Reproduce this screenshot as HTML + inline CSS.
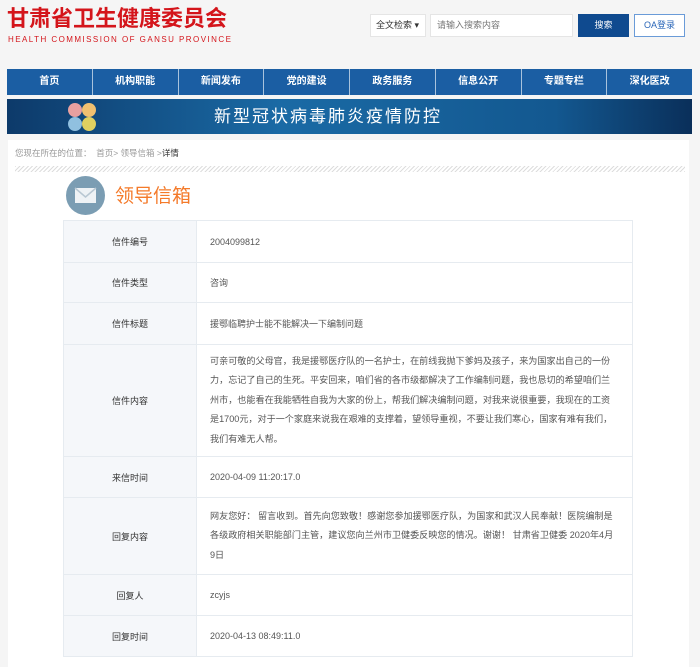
<!DOCTYPE html>
<html><head><meta charset="utf-8"><style>
*{margin:0;padding:0;box-sizing:border-box}
body{width:700px;height:667px;overflow:hidden;background:#f5f5f5;font-family:"Liberation Sans","Noto Sans CJK SC",sans-serif;position:relative}
.abs{position:absolute}
.logo{left:7px;top:5px;color:#d4151b;font-size:22px;font-weight:bold;white-space:nowrap;line-height:28px}
.en{left:8px;top:35px;color:#d4151b;font-size:8px;letter-spacing:1.45px;white-space:nowrap;line-height:10px}
.sel{left:370px;top:14px;width:56px;height:23px;background:#fff;border:1px solid #e5e5e5;font-size:9px;line-height:21px;padding-left:5px;color:#333}
.inp{left:430px;top:14px;width:143px;height:23px;background:#fff;border:1px solid #e5e5e5;font-size:9px;line-height:21px;padding-left:6px;color:#777}
.btn{left:578px;top:14px;width:51px;height:23px;background:#0f4a8f;color:#fff;font-size:9px;line-height:23px;text-align:center}
.oa{left:634px;top:14px;width:51px;height:23px;background:#fff;border:1px solid #6a9bd8;color:#2a66b8;font-size:9px;line-height:21px;text-align:center}
.nav{left:7px;top:69px;width:685px;height:26px;display:flex;background:#a9c3dd}
.nav div{flex:1;background:#1b5ea3;color:#fff;font-size:10px;font-weight:bold;text-align:center;line-height:26px;margin-right:1px}
.nav div:last-child{margin-right:0}
.ban{left:7px;top:99px;width:685px;height:35px;background:linear-gradient(90deg,#0d3a6a,#1a6aa5 40%,#135890 80%,#0a2f5a);color:#fff;font-size:17px;line-height:35px;letter-spacing:2px}
.main{left:8px;top:140px;width:681px;height:527px;background:#fff}
.crumb{left:15px;top:147px;font-size:8.5px;color:#999;white-space:nowrap}
.hatch{left:15px;top:166px;width:670px;height:6px;background:repeating-linear-gradient(135deg,#ddd 0 1px,#fff 1px 3px)}
.ic{left:66px;top:176px;width:39px;height:39px;border-radius:50%;background:#7b9db3}
.tt{left:115px;top:181px;font-size:19px;color:#f47a2a}
table{position:absolute;left:63px;top:220px;width:570px;border-collapse:collapse;font-size:9px;color:#555}
td{border:1px solid #e6ebf0}
td.l{width:133px;background:#f5f7fa;text-align:center;color:#333}
td.r{padding-left:13px}
td.p{line-height:19.4px;padding:6px 0 6px 13px;font-size:9.1px}
</style></head><body>
<div class="abs logo">甘肃省卫生健康委员会</div>
<div class="abs en">HEALTH COMMISSION OF GANSU PROVINCE</div>
<div class="abs sel">全文检索 ▾</div>
<div class="abs inp">请输入搜索内容</div>
<div class="abs btn">搜索</div>
<div class="abs oa">OA登录</div>
<div class="abs nav"><div>首页</div><div>机构职能</div><div>新闻发布</div><div>党的建设</div><div>政务服务</div><div>信息公开</div><div>专题专栏</div><div>深化医改</div></div>
<div class="abs ban"><span style="position:absolute;left:207px">新型冠状病毒肺炎疫情防控</span>
<svg style="position:absolute;left:58px;top:2px" width="36" height="32"><circle cx="10" cy="9" r="7" fill="#e8a0a0"/><circle cx="24" cy="9" r="7" fill="#f0c070"/><circle cx="10" cy="23" r="7" fill="#90c0e0"/><circle cx="24" cy="23" r="7" fill="#e0d060"/></svg></div>
<div class="abs main"></div>
<div class="abs crumb">您现在所在的位置：&nbsp; 首页&gt; 领导信箱 &gt;<span style="color:#333">详情</span></div>
<div class="abs hatch"></div>
<div class="abs ic"><svg width="39" height="39"><rect x="9" y="12" width="21" height="15" fill="#eef2f5"/><path d="M9 12 L19.5 21 L30 12" stroke="#b8c7d2" stroke-width="1.5" fill="none"/></svg></div>
<div class="abs tt">领导信箱</div>
<table>
<tr style="height:42px"><td class="l">信件编号</td><td class="r">2004099812</td></tr>
<tr style="height:40px"><td class="l">信件类型</td><td class="r">咨询</td></tr>
<tr style="height:42px"><td class="l">信件标题</td><td class="r">援鄂临聘护士能不能解决一下编制问题</td></tr>
<tr style="height:112px"><td class="l">信件内容</td><td class="p">可亲可敬的父母官，我是援鄂医疗队的一名护士，在前线我抛下爹妈及孩子，来为国家出自己的一份<br>力，忘记了自己的生死。平安回来，咱们省的各市级都解决了工作编制问题，我也恳切的希望咱们兰<br>州市，也能看在我能牺牲自我为大家的份上，帮我们解决编制问题，对我来说很重要，我现在的工资<br>是1700元，对于一个家庭来说我在艰难的支撑着，望领导重视，不要让我们寒心，国家有难有我们，<br>我们有难无人帮。</td></tr>
<tr style="height:41px"><td class="l">来信时间</td><td class="r">2020-04-09 11:20:17.0</td></tr>
<tr style="height:77px"><td class="l">回复内容</td><td class="p">网友您好： 留言收到。首先向您致敬！感谢您参加援鄂医疗队，为国家和武汉人民奉献！医院编制是<br>各级政府相关职能部门主管，建议您向兰州市卫健委反映您的情况。谢谢！ 甘肃省卫健委 2020年4月<br>9日</td></tr>
<tr style="height:41px"><td class="l">回复人</td><td class="r">zcyjs</td></tr>
<tr style="height:41px"><td class="l">回复时间</td><td class="r">2020-04-13 08:49:11.0</td></tr>
</table>
</body></html>
